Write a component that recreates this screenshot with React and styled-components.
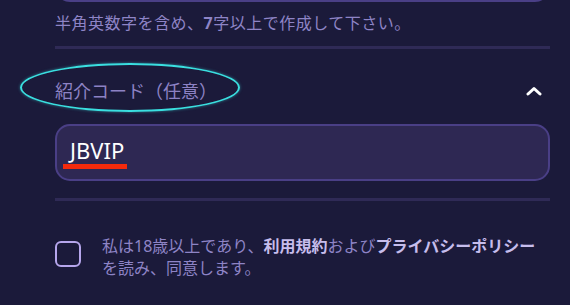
import styled, { createGlobalStyle } from "styled-components";

const Global = createGlobalStyle`
  html, body {
    margin: 0;
    padding: 0;
    background: #1b1a3a;
    overflow: hidden;
  }
  * { box-sizing: border-box; }
`;

const Page = styled.div`
  display: flow-root;
  width: 570px;
  padding: 0 20px 0 55px;
  font-family: "Noto Sans", "Noto Sans CJK JP", sans-serif;
  color: #8e84c6;
`;

const PrevField = styled.div`
  height: 57px;
  margin-top: -55px;
  border: 2px solid #4a3f86;
  border-radius: 15px;
  background: #2e2853;
`;

const Hint = styled.p`
  margin: 10px 0 0;
  font-size: 16px;
  line-height: 22px;
  letter-spacing: 0.5px;
  b { font-weight: 700; }
`;

const Divider = styled.div`
  height: 3px;
  background: #2f2a56;
  margin-top: ${(p) => p.$top}px;
`;

const LabelRow = styled.div`
  margin-top: 29px;
  display: flex;
  align-items: center;
  justify-content: space-between;
  padding-right: 8px;
`;

const Label = styled.span`
  position: relative;
  font-size: 18px;
  line-height: 26px;
  color: #8d82c4;
`;

const Circle = styled.span`
  position: absolute;
  left: -35px;
  top: -15px;
  width: 220px;
  height: 49px;
  border: 2px solid #3adfe0;
  border-radius: 50%;
  box-shadow: 0 0 3px rgba(58, 223, 224, 0.5);
  pointer-events: none;
`;

const Field = styled.div`
  position: relative;
  margin-top: 20px;
  height: 57px;
  border: 2px solid #4a3f86;
  border-radius: 15px;
  background: #2e2853;
  display: flex;
  align-items: center;
  padding: 0 0 5px 13px;
  font-size: 22px;
  color: #ffffff;
`;

const Underline = styled.span`
  position: absolute;
  left: 6px;
  top: 38px;
  width: 64px;
  height: 5px;
  background: #f52a0c;
`;

const AgreeRow = styled.label`
  margin-top: 34px;
  display: flex;
  align-items: flex-start;
  gap: 21px;
`;

const Box = styled.span`
  flex: none;
  width: 26px;
  height: 26px;
  margin-top: 6px;
  border: 2px solid #b6a6ec;
  border-radius: 6px;
`;

const AgreeText = styled.p`
  margin: 0;
  width: 440px;
  font-size: 16px;
  line-height: 22px;
  color: #8e84c6;
  strong { font-weight: 700; color: #c6bdec; }
`;

function Chevron() {
  return (
    <svg width="16" height="10" viewBox="0 0 16 10">
      <path d="M2 8 L8 2.5 L14 8" fill="none" stroke="#ffffff" strokeWidth="3" strokeLinecap="round" strokeLinejoin="round" />
    </svg>
  );
}

export default function App() {
  return (
    <Page>
      <Global />
      <PrevField />
      <Hint>半角英数字を含め、<b>7</b>字以上で作成して下さい。</Hint>
      <Divider $top={12} />
      <LabelRow>
        <Label>
          紹介コード（任意）
          <Circle />
        </Label>
        <Chevron />
      </LabelRow>
      <Field>
        JBVIP
        <Underline />
      </Field>
      <Divider $top={17} />
      <AgreeRow>
        <Box />
        <AgreeText>
          私は18歳以上であり、<strong>利用規約</strong>および<strong>プライバシーポリシー</strong>を読み、同意します。
        </AgreeText>
      </AgreeRow>
    </Page>
  );
}
